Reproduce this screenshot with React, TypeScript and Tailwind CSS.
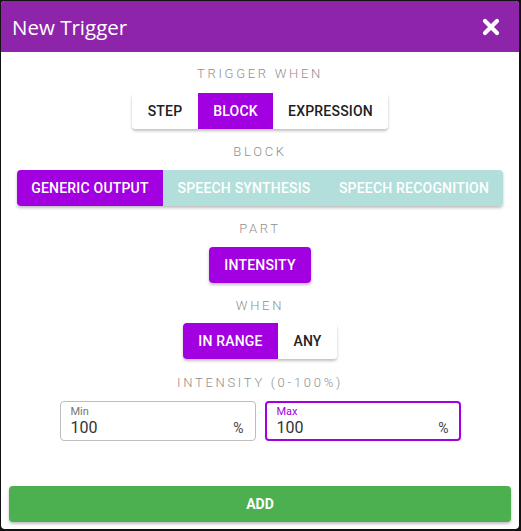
import React from "react";

const roboto = { fontFamily: "Roboto, 'Liberation Sans', sans-serif" };

function Label({ children, className = "" }: { children: React.ReactNode; className?: string }) {
  return (
    <div
      className={`h-5 pt-[2px] flex items-center justify-center text-[13px] font-light tracking-[2.7px] text-[#8f8f8f] uppercase ${className}`}
      style={roboto}
    >
      {children}
    </div>
  );
}

function Btn({
  children,
  active,
  className = "",
}: {
  children: React.ReactNode;
  active?: boolean;
  className?: string;
}) {
  return (
    <div
      className={`h-9 flex items-center justify-center text-[14px] font-medium uppercase tracking-[0.2px] ${
        active ? "bg-[#a200e0] text-white" : "bg-white text-[#212121]"
      } ${className}`}
      style={roboto}
    >
      {children}
    </div>
  );
}

export default function App() {
  return (
    <div className="w-[521px] h-[531px] bg-[#121212] pl-px pt-px">
      <div className="w-[518px] h-[528px] bg-white rounded-[4px] overflow-hidden flex flex-col">
        <div className="h-[51px] bg-[#8e24aa] flex items-center justify-between pl-[11px] pr-[19px] shrink-0">
          <div
            className="text-white text-[20.5px] leading-none pt-px"
            style={{ fontFamily: "'Open Sans', 'Noto Sans', sans-serif" }}
          >
            New Trigger
          </div>
          <svg width="18" height="18" viewBox="0 0 18 18">
            <path
              d="M3 3 L15 15 M15 3 L3 15"
              stroke="white"
              strokeWidth="4.2"
              strokeLinecap="round"
            />
          </svg>
        </div>

        <div className="flex flex-col items-center flex-1 px-2 pb-[7px]">
          <Label className="mt-[11px]">Trigger when</Label>
          <div className="mt-[10px] flex rounded-[4px] overflow-hidden shadow-[0_2px_3px_rgba(0,0,0,0.25)]">
            <Btn className="w-[66px]">Step</Btn>
            <Btn active className="w-[75px]">Block</Btn>
            <Btn className="w-[115px]">Expression</Btn>
          </div>

          <Label className="mt-[12px]">Block</Label>
          <div className="mt-[9px] flex rounded-[4px] overflow-hidden shadow-[0_2px_3px_rgba(0,0,0,0.25)]">
            <Btn active className="w-[146px]">Generic output</Btn>
            <div
              className="w-[340px] h-9 flex bg-[#b2dfdb] text-white text-[14px] font-medium uppercase tracking-[0.2px]"
              style={roboto}
            >
              <div className="w-[162px] flex items-center justify-center">Speech synthesis</div>
              <div className="w-[178px] flex items-center justify-center">Speech recognition</div>
            </div>
          </div>

          <Label className="mt-[12px]">Part</Label>
          <div className="mt-[9px] flex rounded-[4px] overflow-hidden shadow-[0_2px_3px_rgba(0,0,0,0.25)]">
            <Btn active className="w-[102px]">Intensity</Btn>
          </div>

          <Label className="mt-[12px]">When</Label>
          <div className="mt-[8px] flex rounded-[4px] overflow-hidden shadow-[0_2px_3px_rgba(0,0,0,0.25)]">
            <Btn active className="w-[95px]">In range</Btn>
            <Btn className="w-[59px]">Any</Btn>
          </div>

          <Label className="mt-[13px]">Intensity (0-100%)</Label>
          <div className="mt-[9px] flex gap-[9px]" style={roboto}>
            <div className="w-[196px] h-10 rounded-[4px] border border-[#bdbdbd] pl-[10px] pr-[11px] flex flex-col">
              <div className="text-[11px] leading-[12px] text-[#757575] mt-[4px]">Min</div>
              <div className="flex justify-between items-center text-[16px] leading-[20px] text-[#333333]">
                <span>100</span>
                <span className="text-[14px] text-[#424242]">%</span>
              </div>
            </div>
            <div className="w-[196px] h-10 rounded-[4px] border-2 border-[#a200e0] pl-[10px] pr-[10px] flex flex-col">
              <div className="text-[11px] leading-[12px] text-[#a200e0] mt-[3px]">Max</div>
              <div className="flex justify-between items-center text-[16px] leading-[20px] text-[#333333]">
                <span>100</span>
                <span className="text-[14px] text-[#424242]">%</span>
              </div>
            </div>
          </div>

          <div
            className="mt-auto w-full h-9 bg-[#4caf50] rounded-[4px] flex items-center justify-center text-white text-[14px] font-bold shadow-[0_2px_3px_rgba(0,0,0,0.25)]"
            style={roboto}
          >
            ADD
          </div>
        </div>
      </div>
    </div>
  );
}
